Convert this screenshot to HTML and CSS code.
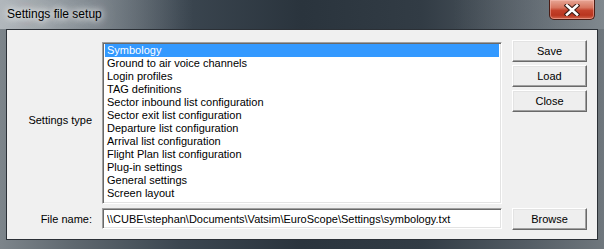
FILE: index.html
```html
<!DOCTYPE html>
<html>
<head>
    <title>Settings file setup</title>
    <link rel="stylesheet" href="styles.css">
</head>
<body>
    <div class="window">
        <div class="titlebar">
            <span class="title">Settings file setup</span>
            <button class="close-btn" aria-label="Close">
                <svg width="16" height="12" viewBox="0 0 16 12">
                    <path d="M3 1.5 L13 10.5 M13 1.5 L3 10.5" stroke="#3a1a14" stroke-width="4.6" stroke-linecap="square"/>
                    <path d="M3 1.5 L13 10.5 M13 1.5 L3 10.5" stroke="#fff" stroke-width="2.6" stroke-linecap="square"/>
                </svg>
            </button>
        </div>
        <div class="client">
            <div class="label type-label">Settings type</div>
            <ul class="listbox">
                <li class="selected">Symbology</li>
                <li>Ground to air voice channels</li>
                <li>Login profiles</li>
                <li>TAG definitions</li>
                <li>Sector inbound list configuration</li>
                <li>Sector exit list configuration</li>
                <li>Departure list configuration</li>
                <li>Arrival list configuration</li>
                <li>Flight Plan list configuration</li>
                <li>Plug-in settings</li>
                <li>General settings</li>
                <li>Screen layout</li>
            </ul>
            <div class="buttons">
                <button class="btn">Save</button>
                <button class="btn">Load</button>
                <button class="btn">Close</button>
            </div>
            <div class="label">File name:</div>
            <input type="text" class="filename" value="\\CUBE\stephan\Documents\Vatsim\EuroScope\Settings\symbology.txt">
            <button class="btn">Browse</button>
        </div>
    </div>
</body>
</html>
```

FILE: styles.css
```css
body {
    margin: 0;
    font-family: "Liberation Sans", Arial, sans-serif;
    font-size: 11px;
}

.window {
    width: 604px;
    height: 249px;
    display: flex;
    flex-direction: column;
    background: linear-gradient(90deg, #7d858b 0%, #5f686f 12%, #3b4650 30%, #2a343d 50%, #323c45 70%, #555e66 88%, #6f777d 100%);
}

.titlebar {
    height: 29px;
    display: flex;
    align-items: flex-start;
    background: linear-gradient(90deg, rgba(205, 210, 214, 0.65) 0%, rgba(185, 192, 198, 0.45) 14%, rgba(0, 0, 0, 0) 32%, rgba(0, 0, 0, 0) 75%, rgba(160, 168, 174, 0.35) 100%);
}

.title {
    margin: 7px 0 0 7px;
    font-size: 12px;
    color: #000;
    text-shadow: 0 0 6px #fff, 0 0 10px rgba(255, 255, 255, 0.9), 0 0 16px rgba(255, 255, 255, 0.8);
}

.close-btn {
    margin-left: auto;
    margin-right: 9px;
    width: 46px;
    height: 20px;
    padding: 0;
    border: 1px solid #4a1c14;
    border-top: none;
    border-radius: 0 0 5px 5px;
    background: linear-gradient(180deg, #e7a695 0%, #d7755f 40%, #c3412a 55%, #b9351f 80%, #d0654c 100%);
    box-shadow: inset 0 0 0 1px rgba(255, 200, 190, 0.45);
    display: flex;
    align-items: center;
    justify-content: center;
}

.client {
    margin: 0 6px 9px 6px;
    height: 211px;
    box-sizing: border-box;
    border: 1px solid #2b3036;
    background-color: #f0f0f0;
    padding: 12px 0 0 0;
    display: grid;
    grid-template-columns: 85px 400px 75px;
    grid-template-rows: 162px 22px;
    column-gap: 10px;
    row-gap: 4px;
}

.label {
    text-align: right;
    align-self: center;
    color: #000;
}

.type-label {
    padding-bottom: 7px;
}

.listbox {
    margin: 0;
    list-style: none;
    background-color: #fff;
    border-top: 1px solid #a0a0a0;
    border-left: 1px solid #a0a0a0;
    border-bottom: 1px solid #fff;
    border-right: 1px solid #fff;
    box-shadow: inset 1px 1px 0 #696969, inset -1px -1px 0 #e3e3e3;
    padding: 1px 2px;
}

.listbox li {
    height: 13px;
    line-height: 13px;
    padding-left: 2px;
    color: #000;
    white-space: nowrap;
}

.listbox li.selected {
    background-color: #3399ff;
    color: #fff;
}

.buttons {
    display: flex;
    flex-direction: column;
    gap: 3px;
    margin-top: -2px;
}

.btn {
    width: 75px;
    height: 22px;
    padding: 0;
    font-family: "Liberation Sans", Arial, sans-serif;
    font-size: 11px;
    color: #000;
    background-color: #eeeeee;
    border-top: 1px solid #fff;
    border-left: 1px solid #fff;
    border-bottom: 1px solid #696969;
    border-right: 1px solid #696969;
    box-shadow: inset -1px -1px 0 #a0a0a0, inset 1px 1px 0 #e3e3e3;
}

.filename {
    height: 21px;
    box-sizing: border-box;
    margin: 0;
    padding: 0 0 0 4px;
    font-family: "Liberation Sans", Arial, sans-serif;
    font-size: 11px;
    color: #000;
    background-color: #fff;
    border-top: 1px solid #a0a0a0;
    border-left: 1px solid #a0a0a0;
    border-bottom: 1px solid #fff;
    border-right: 1px solid #fff;
    box-shadow: inset 1px 1px 0 #696969, inset -1px -1px 0 #e3e3e3;
    outline: none;
}
```
